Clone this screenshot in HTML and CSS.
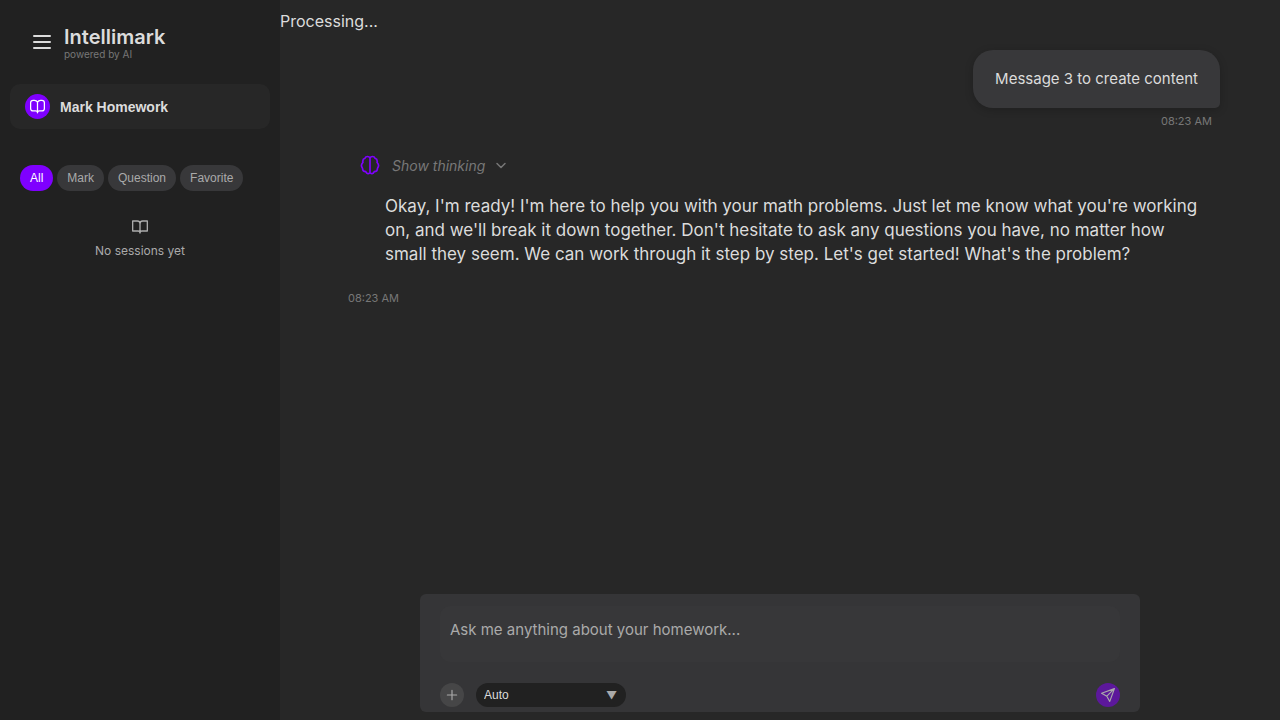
FILE: index.html
```html
<!DOCTYPE html>
<html lang="en">
<head>
<meta charset="utf-8">
<meta name="viewport" content="width=device-width, initial-scale=1">
<title>Intellimark</title>
<link rel="stylesheet" href="styles.css">
</head>
<body>
<div class="app">
  <aside class="sidebar">
    <header class="brand">
      <button class="menu-button" type="button" aria-label="Toggle menu">
        <svg width="24" height="24" viewBox="0 0 24 24" fill="none" stroke="currentColor" stroke-width="2" stroke-linecap="round"><path d="M4 6h16M4 12h16M4 18h16"/></svg>
      </button>
      <div>
        <h1 class="brand-name">Intellimark</h1>
        <p class="brand-tagline">powered by AI</p>
      </div>
    </header>
    <button class="nav-item" type="button">
      <span class="nav-icon">
        <svg width="15" height="15" viewBox="0 0 24 24" fill="none" stroke="currentColor" stroke-width="2" stroke-linecap="round" stroke-linejoin="round"><path d="M12 5v17M12 5c-1-2-3-3-5-3H5a4 4 0 0 0-4 4v9a4 4 0 0 0 4 4h4c2 0 3 1 3 3 0-2 1-3 3-3h4a4 4 0 0 0 4-4V6a4 4 0 0 0-4-4h-2c-2 0-4 1-5 3z"/></svg>
      </span>
      Mark Homework
    </button>
    <div class="filters">
      <button class="filter filter-active" type="button">All</button>
      <button class="filter" type="button">Mark</button>
      <button class="filter" type="button">Question</button>
      <button class="filter" type="button">Favorite</button>
    </div>
    <div class="empty">
      <svg width="16" height="16" viewBox="0 0 24 24" fill="none" stroke="currentColor" stroke-width="2" stroke-linecap="round" stroke-linejoin="round"><path d="M1 3h7a4 4 0 0 1 4 4v14a3 3 0 0 0-3-3H1zM23 3h-7a4 4 0 0 0-4 4v14a3 3 0 0 1 3-3h8z"/></svg>
      <p class="empty-text">No sessions yet</p>
    </div>
  </aside>
  <main class="chat">
    <p class="status">Processing...</p>
    <section class="messages">
      <article class="message-user">
        <p class="bubble">Message 3 to create content</p>
        <time class="time">08:23 AM</time>
      </article>
      <article class="message-bot">
        <button class="thinking" type="button">
          <svg class="brain" width="20" height="20" viewBox="0 0 24 24" fill="none" stroke="currentColor" stroke-width="2" stroke-linecap="round" stroke-linejoin="round"><path d="M12 4v17M12 4C11 1 7 1 6 4 3 5 3 7 3.500 9 1.500 11 1.500 14 3 16c0 2 1.500 4 4 4 1 3 4 3 5 1 1 2 4 2 5-1 2.500 0 4-2 4-4 1.500-2 1.500-5-.5-7C21 7 21 5 18 4c-1-3-5-3-6 0"/></svg>
          <span>Show thinking</span>
          <svg width="12" height="12" viewBox="0 0 24 24" fill="none" stroke="currentColor" stroke-width="3" stroke-linecap="round" stroke-linejoin="round"><path d="m4 9 8 8 8-8"/></svg>
        </button>
        <p class="answer">Okay, I'm ready! I'm here to help you with your math problems. Just let me know what you're working on, and we'll break it down together. Don't hesitate to ask any questions you have, no matter how small they seem. We can work through it step by step. Let's get started! What's the problem?</p>
        <time class="time">08:23 AM</time>
      </article>
    </section>
    <form class="composer">
      <textarea class="prompt" rows="1" aria-label="Message" placeholder="Ask me anything about your homework..."></textarea>
      <div class="tools">
        <button class="round-button" type="button" aria-label="Add attachment">
          <svg width="14" height="14" viewBox="0 0 24 24" fill="none" stroke="currentColor" stroke-width="2" stroke-linecap="round"><path d="M12 4v16M4 12h16"/></svg>
        </button>
        <div class="select-wrap">
          <select class="mode" aria-label="Mode"><option>Auto</option></select>
          <span class="arrow" aria-hidden="true">▼</span>
        </div>
        <button class="round-button send" type="button" aria-label="Send">
          <svg width="14" height="14" viewBox="0 0 24 24" fill="none" stroke="currentColor" stroke-width="2" stroke-linecap="round" stroke-linejoin="round"><path d="M23 1 1 9l9 5 5 9zM23 1 10 14"/></svg>
        </button>
      </div>
    </form>
  </main>
</div>
</body>
</html>
```
FILE: styles.css
```css
* { box-sizing: border-box; }
body, h1, p { margin: 0; }
body { background: #272727; color: #dcdcdc; font: 16px/24px Inter, sans-serif; }
button { border: 0; padding: 0; color: inherit; cursor: pointer; font-family: "Liberation Sans", Arial, sans-serif; }
svg { display: block; flex: none; }
.app { display: flex; min-height: 100vh; }

.sidebar { width: 280px; flex: none; padding: 25px 10px; background: #212121; }
.brand { display: flex; align-items: center; gap: 10px; padding-left: 20px; }
.menu-button { background: none; padding: 0; }
.brand-name { font-size: 20px; line-height: 24px; font-weight: 600; }
.brand-tagline { font-size: 10px; line-height: 10px; color: #777; }
.nav-item { display: flex; align-items: center; gap: 10px; width: 100%; height: 45px; margin-top: 25px; padding: 0 15px; border-radius: 10px; background: #272727; font-size: 14px; font-weight: 700; }
.nav-icon { display: grid; place-items: center; width: 25px; height: 25px; border-radius: 50%; background: #7f00ff; color: #fff; }
.filters { display: flex; gap: 4px; margin-top: 36px; padding: 0 10px; }
.filter { height: 26px; padding: 0 10px; border-radius: 13px; background: #38383a; color: #aaa; font-size: 12px; }
.filter-active { background: #7f00ff; color: #fff; }
.empty { display: flex; flex-direction: column; align-items: center; gap: 6px; margin-top: 28px; color: #aaa; }
.empty-text { font-size: 12px; line-height: 20px; }

.chat { display: flex; flex: 1; flex-direction: column; min-width: 0; padding-bottom: 8px; }
.status { padding-top: 9px; }
.messages { flex: 1; padding: 17px 60px 0; }
.message-user { display: flex; flex-direction: column; align-items: flex-end; }
.bubble { padding: 17px 22px; border-radius: 20px 20px 5px 20px; background: #38383a; box-shadow: 0 2px 8px #0003; font-size: 15px; }
.time { padding: 0 8px; color: #777; font-size: 11px; line-height: 16px; }
.message-user .time { margin-top: 5px; }
.message-bot { display: flex; flex-direction: column; align-items: flex-start; margin-top: 26px; }
.thinking { display: flex; align-items: center; gap: 10px; height: 20px; margin-left: 20px; background: none; color: #777; font: italic 14px/20px Inter, sans-serif; }
.thinking span { padding-top: 2px; }
.brain { margin-right: 2px; color: #7f00ff; }
.answer { padding: 19px 20px 0 45px; font-size: 17px; line-height: 24px; }
.message-bot .time { margin-top: 24px; }

.composer { width: 720px; max-width: 100%; align-self: center; padding: 12px 20px 5px; border-radius: 6px; background: #353537; }
.prompt { display: block; width: 100%; height: 56px; padding: 12px 10px; border: 0; border-radius: 10px; outline: 0; resize: none; background: #373739; color: #dcdcdc; font: 15px/24px Inter, sans-serif; }
.prompt::placeholder { color: #aaa; opacity: 1; }
.tools { display: flex; align-items: center; gap: 12px; margin-top: 21px; }
.round-button { display: grid; place-items: center; width: 24px; height: 24px; border-radius: 50%; background: #464647; color: #aaa; }
.send { margin-left: auto; background: #5c189b; }
.select-wrap { position: relative; width: 150px; }
.mode { display: block; appearance: none; width: 100%; height: 24px; padding: 0 8px; border: 0; border-radius: 12px; background: #212121; color: #dcdcdc; font: 12px "Liberation Sans", Arial, sans-serif; }
.arrow { position: absolute; top: 0; right: 9px; color: #aaa; font-size: 11px; pointer-events: none; }
```
